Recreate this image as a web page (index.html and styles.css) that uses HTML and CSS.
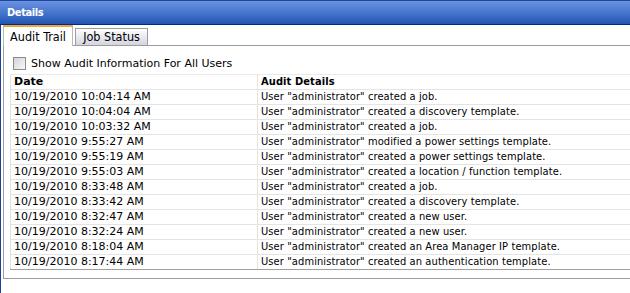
FILE: index.html
```html
<!DOCTYPE html>
<html lang="en">
<head>
    <meta charset="UTF-8">
    <title>Details</title>
    <link rel="stylesheet" href="styles.css">
</head>
<body>
    <div class="details">
        <div class="titlebar">Details</div>
        <div class="details-body">
            <div class="tabstrip">
                <div class="tab active">Audit Trail</div>
                <div class="tab">Job Status</div>
            </div>
            <div class="panel">
                <label class="show-all">
                    <input type="checkbox" class="check">
                    <span>Show Audit Information For All Users</span>
                </label>
                <table class="audit">
                    <thead>
                        <tr><th class="col-date">Date</th><th class="col-info">Audit Details</th></tr>
                    </thead>
                    <tbody>
                        <tr><td>10/19/2010 10:04:14 AM</td><td>User "administrator" created a job.</td></tr>
                        <tr><td>10/19/2010 10:04:04 AM</td><td>User "administrator" created a discovery template.</td></tr>
                        <tr><td>10/19/2010 10:03:32 AM</td><td>User "administrator" created a job.</td></tr>
                        <tr><td>10/19/2010 9:55:27 AM</td><td>User "administrator" modified a power settings template.</td></tr>
                        <tr><td>10/19/2010 9:55:19 AM</td><td>User "administrator" created a power settings template.</td></tr>
                        <tr><td>10/19/2010 9:55:03 AM</td><td>User "administrator" created a location / function template.</td></tr>
                        <tr><td>10/19/2010 8:33:48 AM</td><td>User "administrator" created a job.</td></tr>
                        <tr><td>10/19/2010 8:33:42 AM</td><td>User "administrator" created a discovery template.</td></tr>
                        <tr><td>10/19/2010 8:32:47 AM</td><td>User "administrator" created a new user.</td></tr>
                        <tr><td>10/19/2010 8:32:24 AM</td><td>User "administrator" created a new user.</td></tr>
                        <tr><td>10/19/2010 8:18:04 AM</td><td>User "administrator" created an Area Manager IP template.</td></tr>
                        <tr><td>10/19/2010 8:17:44 AM</td><td>User "administrator" created an authentication template.</td></tr>
                    </tbody>
                </table>
            </div>
        </div>
    </div>
</body>
</html>
```

FILE: styles.css
```css
* {
    margin: 0;
    padding: 0;
    box-sizing: border-box;
}

body {
    font-family: 'DejaVu Sans', Verdana, sans-serif;
    font-size: 11px;
    color: #000;
    background: #fff;
    overflow: hidden;
}

.details {
    height: 293px;
    display: flex;
    flex-direction: column;
}

.titlebar {
    height: 25px;
    line-height: 23px;
    padding-left: 7px;
    color: #fff;
    font-family: 'DejaVu Sans Condensed', 'DejaVu Sans', sans-serif;
    font-size: 11px;
    font-weight: bold;
    letter-spacing: -0.4px;
    background: linear-gradient(#6a92df 0%, #4676cd 50%, #2355b4 100%);
    border-top: 1px solid #1c47a0;
    border-bottom: 1px solid #00298a;
}

.details-body {
    flex: 1;
    border-left: 1px solid #1b3f9a;
    padding-left: 2px;
    padding-bottom: 2px;
}

.tabstrip {
    display: flex;
    align-items: flex-end;
    height: 21px;
    border-bottom: 1px solid #9c9c9c;
}

.tab {
    width: 73px;
    height: 17px;
    line-height: 16px;
    margin-left: 2px;
    text-align: center;
    font-family: 'DejaVu Sans Condensed', 'DejaVu Sans', sans-serif;
    font-size: 12.5px;
    border: 1px solid #9c9c9c;
    border-bottom: none;
    background: linear-gradient(#ffffff, #d4d4e2);
}

.tab.active {
    width: 70px;
    height: 21px;
    line-height: 19px;
    margin-left: 0;
    margin-bottom: -1px;
    background: #fff;
    border-top: 2px solid #f0a830;
    border-color: #f0a830 #b8b8b8 #fff #b8b8b8;
}

.panel {
    border-left: 1px solid #9c9c9c;
    border-bottom: 1px solid #9c9c9c;
    padding: 10px 0 8px 0;
}

.show-all {
    display: flex;
    align-items: center;
    height: 14px;
    margin-left: 9px;
    gap: 5px;
}

.check {
    appearance: none;
    width: 13px;
    height: 13px;
    border: 1px solid #8c8c8c;
    background: linear-gradient(135deg, #d4d4d4, #f8f8f8);
}

.audit {
    margin: 4px 0 0 6px;
    width: calc(100% - 6px);
    border-collapse: collapse;
    border-left: 1px solid #e2e2e2;
    border-top: 1px solid #eaeaea;
}

.audit th,
.audit td {
    height: 15px;
    line-height: 14px;
    padding: 0 3px;
    text-align: left;
    white-space: nowrap;
    border-bottom: 1px solid #e4e4e4;
}

.audit th {
    font-weight: bold;
}

.audit .col-date {
    width: 247px;
    border-right: 1px solid #e4e4e4;
}

.audit td:first-child {
    border-right: 1px solid #e4e4e4;
}

.audit td + td,
.audit .col-info {
    font-family: 'DejaVu Sans Condensed', 'DejaVu Sans', sans-serif;
    letter-spacing: 0.1px;
}

.audit tbody tr:last-child td {
    border-bottom: 1px solid #a0a0a0;
}
```
